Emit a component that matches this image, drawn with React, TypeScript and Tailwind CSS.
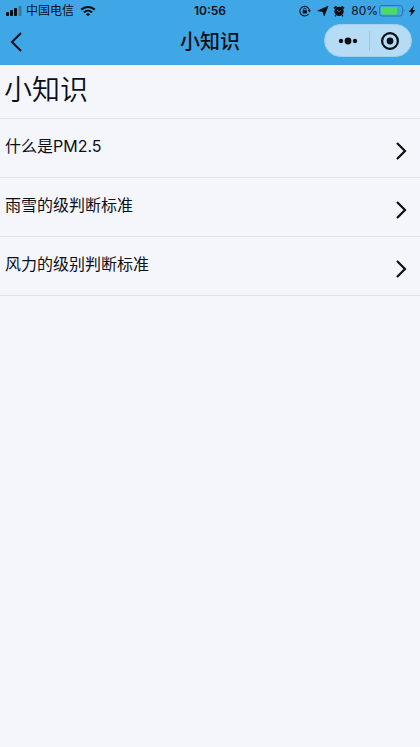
import React from "react";

const topics = ["什么是PM2.5", "雨雪的级判断标准", "风力的级别判断标准"];

function StatusBar() {
  return (
    <div className="grid h-[22px] grid-cols-[1fr_auto_1fr] items-center px-1.5 text-xs">
      <div className="flex items-center">
        {/* Signal */}
        <svg className="h-3 w-4" viewBox="0 0 16 12" fill="currentColor">
          <rect x="0" y="7" width="3" height="4" rx="0.8" />
          <rect x="4" y="5" width="3" height="6" rx="0.8" />
          <rect x="8" y="3" width="3" height="8" rx="0.8" />
          <rect x="12.5" y="1" width="3" height="10" rx="0.8" opacity="0.3" />
        </svg>
        <span className="ml-1">中国电信</span>
        {/* Wifi */}
        <svg className="ml-1.5 h-3 w-4" viewBox="0 0 16 12" fill="none" stroke="currentColor" strokeWidth="2">
          <path d="M1.2 4.8C5 0.9 11 0.9 14.8 4.8" />
          <path d="M3.9 7.5C6.3 5.2 9.7 5.2 12.1 7.5" />
          <path d="M8 11.2 5.9 9.2Q8 7.5 10.1 9.2Z" fill="currentColor" stroke="none" />
        </svg>
      </div>

      <span className="font-semibold">10:56</span>

      <div className="flex items-center justify-end">
        {/* Rotation lock */}
        <svg className="h-3 w-3" viewBox="0 0 12 12" fill="none" stroke="currentColor">
          <path d="M9.6 9A4.8 4.8 0 1 1 10.5 5.5" strokeWidth="1.1" />
          <path d="M8.8 5.3H12L10.4 7.5Z" fill="currentColor" stroke="none" />
          <rect x="3.7" y="5.2" width="4.2" height="3.3" rx="0.4" fill="currentColor" stroke="none" />
          <path d="M4.6 5.4V4.3a1.2 1.2 0 0 1 2.4 0v1.1" strokeWidth="0.9" />
        </svg>
        {/* Location */}
        <svg className="ml-1.5 h-3 w-3" viewBox="0 0 12 12" fill="currentColor">
          <path d="M11 1.2 7.2 10.8 5.9 6.6 0.8 5.8Z" stroke="currentColor" strokeWidth="0.7" />
        </svg>
        {/* Alarm */}
        <svg className="ml-1 h-3 w-3" viewBox="0 0 12 12" fill="none" stroke="currentColor">
          <circle cx="6" cy="6.4" r="4.7" fill="currentColor" stroke="none" />
          <path d="M1 3.4 3.5 1.3M11 3.4 8.5 1.3" strokeWidth="1.7" />
          <path d="m3 10-1 1.3M9 10l1 1.3" strokeWidth="1.2" />
          <path d="M3.9 4.8 6 6.6 7.8 5.6" stroke="#40a7e7" strokeWidth="0.7" />
        </svg>
        <span className="ml-1.5">80%</span>
        {/* Battery */}
        <svg className="h-3 w-7" viewBox="0 0 28 12" fill="none">
          <rect x="1.5" y="0.5" width="23" height="10.5" rx="2.5" stroke="#2878a8" />
          <rect x="3" y="2" width="16" height="7.5" rx="1" fill="#4cd964" />
          <path d="M25.7 4q1.8 1.8 0 3.6Z" fill="#2878a8" />
        </svg>
        <svg className="-mr-0.5 ml-0.5 h-3 w-2" viewBox="0 0 8 12" fill="currentColor">
          <path d="M6 0.5 0.6 6.9h2.7L2.2 11.5 7.4 5.1H4.7Z" />
        </svg>
      </div>
    </div>
  );
}

function NavBar() {
  return (
    <div className="grid h-[43px] grid-cols-[1fr_auto_1fr] items-start px-2">
      <button type="button" aria-label="返回" className="mt-2.5 w-5">
        <svg className="h-5 w-4" viewBox="0 0 16 20" fill="none" stroke="currentColor" strokeWidth="2">
          <path d="M13 1 4 10l9 9" />
        </svg>
      </button>
      <h1 className="mt-1.5 text-xl font-medium">小知识</h1>
      <div className="mt-0.5 flex h-[33px] w-22 items-center justify-self-end rounded-full border border-[#9fd1f0] bg-[#b5dcf4]">
        <button type="button" aria-label="更多" className="flex flex-1 justify-center pl-0.5">
          <svg className="h-5 w-5" viewBox="0 0 20 20" fill="currentColor">
            <circle cx="3" cy="10" r="2.2" />
            <circle cx="10" cy="10" r="3.4" />
            <circle cx="17" cy="10" r="2.2" />
          </svg>
        </button>
        <span className="h-5 w-px bg-[#93c9ea]" />
        <button type="button" aria-label="关闭" className="flex flex-1 justify-center">
          <svg className="h-5 w-5" viewBox="0 0 20 20" fill="none" stroke="currentColor" strokeWidth="2.2">
            <circle cx="10" cy="10" r="7.9" />
            <circle cx="10" cy="10" r="3.4" fill="currentColor" stroke="none" />
          </svg>
        </button>
      </div>
    </div>
  );
}

export default function App() {
  return (
    <div className="min-h-screen bg-[#f4f6fb] text-[#0b0f18] font-['Inter','Noto_Sans_CJK_SC',sans-serif]">
      <header className="bg-[#40a7e7]">
        <StatusBar />
        <NavBar />
      </header>

      <main>
        <h2 className="border-b border-[#dfe1e3] px-1 pt-1.5 pb-2 text-[28px] leading-[39px] font-[350]">
          小知识
        </h2>
        <ul>
          {topics.map((topic) => (
            <li key={topic} className="border-b border-[#dfe1e3]">
              <button type="button" className="flex h-[58px] w-full items-center justify-between pr-3 pl-[5px] text-left">
                <span className="pb-1 text-base">{topic}</span>
                <svg className="mt-1.5 h-5 w-3.5" viewBox="0 0 14 20" fill="none" stroke="currentColor" strokeWidth="2.2">
                  <path d="m3 2 8 8-8 8" />
                </svg>
              </button>
            </li>
          ))}
        </ul>
      </main>
    </div>
  );
}
